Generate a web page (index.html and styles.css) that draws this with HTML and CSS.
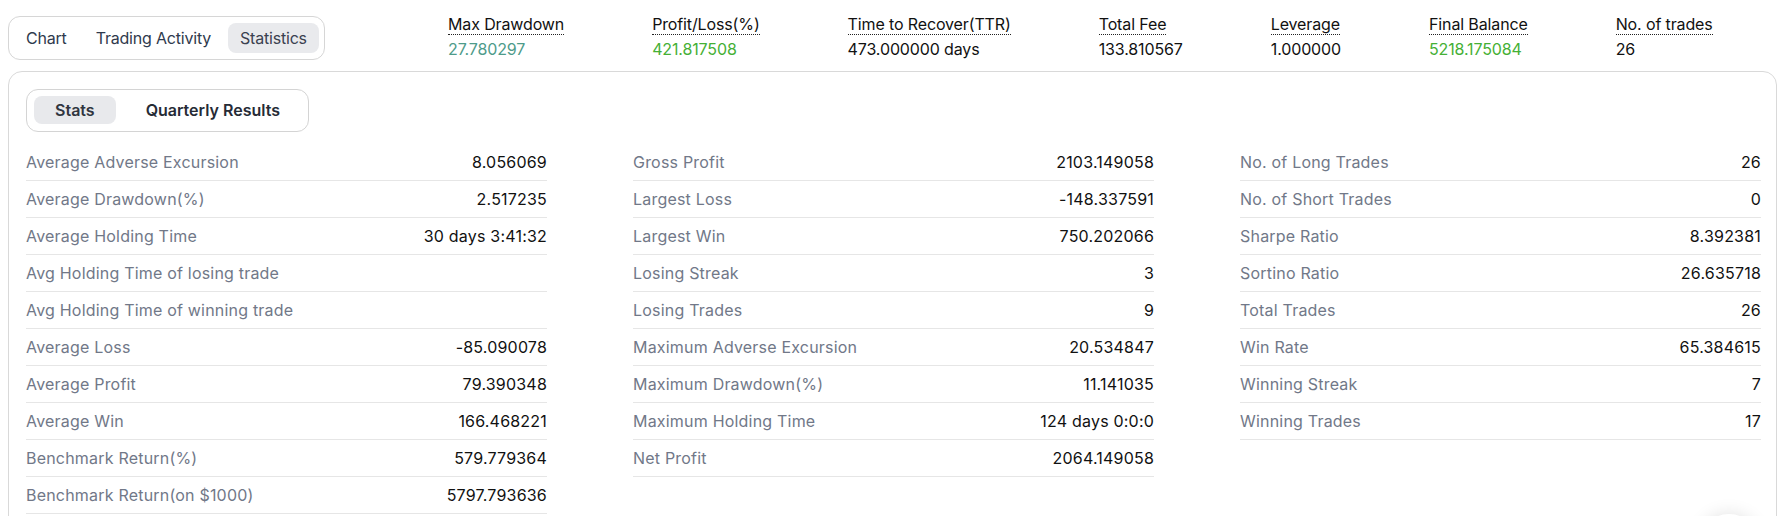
FILE: index.html
```html
<!DOCTYPE html>
<html>
<head>
<meta charset="utf-8">
<link rel="stylesheet" href="styles.css">
</head>
<body>
<div class="page">
  <div class="topbar">
    <div class="tabs">
      <div class="tab">Chart</div>
      <div class="tab">Trading Activity</div>
      <div class="tab active">Statistics</div>
    </div>
    <div class="hstats">
      <div class="hstat"><span class="hlabel">Max Drawdown</span><span class="hval teal">27.780297</span></div>
      <div class="hstat"><span class="hlabel">Profit/Loss(%)</span><span class="hval green">421.817508</span></div>
      <div class="hstat"><span class="hlabel">Time to Recover(TTR)</span><span class="hval">473.000000 days</span></div>
      <div class="hstat"><span class="hlabel">Total Fee</span><span class="hval">133.810567</span></div>
      <div class="hstat"><span class="hlabel">Leverage</span><span class="hval">1.000000</span></div>
      <div class="hstat"><span class="hlabel">Final Balance</span><span class="hval green">5218.175084</span></div>
      <div class="hstat"><span class="hlabel">No. of trades</span><span class="hval">26</span></div>
    </div>
  </div>

  <div class="card">
    <div class="subtabs">
      <div class="subtab active">Stats</div>
      <div class="subtab">Quarterly Results</div>
    </div>
    <div class="grid">
      <div class="col">
        <div class="row"><span class="lbl">Average Adverse Excursion</span><span class="val">8.056069</span></div>
        <div class="row"><span class="lbl">Average Drawdown(%)</span><span class="val">2.517235</span></div>
        <div class="row"><span class="lbl">Average Holding Time</span><span class="val">30 days 3:41:32</span></div>
        <div class="row"><span class="lbl">Avg Holding Time of losing trade</span><span class="val"></span></div>
        <div class="row"><span class="lbl">Avg Holding Time of winning trade</span><span class="val"></span></div>
        <div class="row"><span class="lbl">Average Loss</span><span class="val">-85.090078</span></div>
        <div class="row"><span class="lbl">Average Profit</span><span class="val">79.390348</span></div>
        <div class="row"><span class="lbl">Average Win</span><span class="val">166.468221</span></div>
        <div class="row"><span class="lbl">Benchmark Return(%)</span><span class="val">579.779364</span></div>
        <div class="row"><span class="lbl">Benchmark Return(on $1000)</span><span class="val">5797.793636</span></div>
      </div>
      <div class="col">
        <div class="row"><span class="lbl">Gross Profit</span><span class="val">2103.149058</span></div>
        <div class="row"><span class="lbl">Largest Loss</span><span class="val">-148.337591</span></div>
        <div class="row"><span class="lbl">Largest Win</span><span class="val">750.202066</span></div>
        <div class="row"><span class="lbl">Losing Streak</span><span class="val">3</span></div>
        <div class="row"><span class="lbl">Losing Trades</span><span class="val">9</span></div>
        <div class="row"><span class="lbl">Maximum Adverse Excursion</span><span class="val">20.534847</span></div>
        <div class="row"><span class="lbl">Maximum Drawdown(%)</span><span class="val">11.141035</span></div>
        <div class="row"><span class="lbl">Maximum Holding Time</span><span class="val">124 days 0:0:0</span></div>
        <div class="row"><span class="lbl">Net Profit</span><span class="val">2064.149058</span></div>
      </div>
      <div class="col">
        <div class="row"><span class="lbl">No. of Long Trades</span><span class="val">26</span></div>
        <div class="row"><span class="lbl">No. of Short Trades</span><span class="val">0</span></div>
        <div class="row"><span class="lbl">Sharpe Ratio</span><span class="val">8.392381</span></div>
        <div class="row"><span class="lbl">Sortino Ratio</span><span class="val">26.635718</span></div>
        <div class="row"><span class="lbl">Total Trades</span><span class="val">26</span></div>
        <div class="row"><span class="lbl">Win Rate</span><span class="val">65.384615</span></div>
        <div class="row"><span class="lbl">Winning Streak</span><span class="val">7</span></div>
        <div class="row"><span class="lbl">Winning Trades</span><span class="val">17</span></div>
      </div>
    </div>
  </div>
</div>
<div class="fab"></div>
</body>
</html>
```

FILE: styles.css
```css
html, body {
  margin: 0;
  padding: 0;
  overflow: hidden;
  background: #ffffff;
}

body {
  font-family: Inter, "Liberation Sans", sans-serif;
  color: #111111;
}

.page {
  padding: 14px 0 0 8px;
}

.topbar {
  display: flex;
  align-items: flex-start;
}

.tabs {
  margin-top: 2px;
  display: flex;
  gap: 5px;
  padding: 6px 4px 6px 5px;
  border: 1px solid #d6d6d6;
  border-radius: 12px;
  width: 317px;
  box-sizing: border-box;
  white-space: nowrap;
}

.tab {
  height: 30px;
  line-height: 30px;
  padding: 0 12px;
  font-size: 16px;
  letter-spacing: -0.2px;
  color: #2f3a4d;
  border-radius: 8px;
  white-space: nowrap;
}

.tab.active {
  background: #e9eaed;
  color: #3a4150;
}

.hstats {
  display: flex;
  gap: 88px;
  margin-left: 123px;
}

.hstat {
  display: flex;
  flex-direction: column;
  align-items: flex-start;
  white-space: nowrap;
}

.hlabel {
  font-size: 16px;
  line-height: 20px;
  border-bottom: 1px dotted #222;
  color: #111;
  letter-spacing: -0.13px;
}

.hval {
  font-size: 16px;
  line-height: 20px;
  margin-top: 4px;
  color: #111;
  letter-spacing: -0.13px;
}

.hval.teal {
  color: #4e9b8a;
}

.hval.green {
  color: #45b035;
}

.card {
  margin-top: 11px;
  border: 1px solid #d9d9d9;
  border-radius: 14px;
  padding: 17px 15px 40px 17px;
}

.subtabs {
  display: inline-flex;
  gap: 9px;
  padding: 6px 7px 7px 7px;
  border: 1px solid #d4d4d4;
  border-radius: 12px;
}

.subtab {
  height: 28px;
  line-height: 28px;
  padding: 0 21px;
  font-size: 16px;
  font-weight: 600;
  color: #262b36;
  border-radius: 8px;
}

.subtab.active {
  background: #e8e9ec;
  color: #30353f;
}

.grid {
  margin-top: 12px;
  display: grid;
  grid-template-columns: 1fr 1fr 1fr;
  column-gap: 86px;
  align-items: start;
}

.row {
  display: flex;
  justify-content: space-between;
  align-items: center;
  height: 36px;
  border-bottom: 1px solid #e6e6e6;
  font-size: 16px;
  letter-spacing: 0.2px;
}

.lbl {
  color: #717888;
}

.val {
  color: #111111;
}

.fab {
  position: fixed;
  right: 18px;
  bottom: -58px;
  width: 60px;
  height: 60px;
  border-radius: 50%;
  background: #ffffff;
  box-shadow: 0 0 18px rgba(0, 0, 0, 0.12);
}
```
